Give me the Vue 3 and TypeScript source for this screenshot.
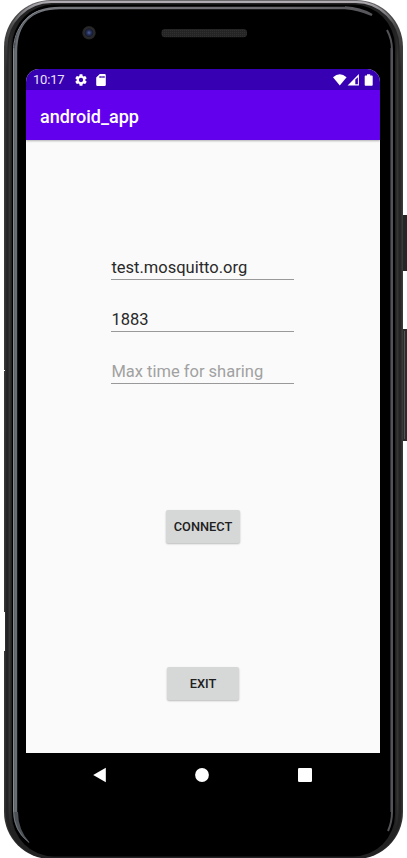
<script setup lang="ts">
import { ref } from 'vue'

interface Field {
  id: string
  value: string
  hint: string
}

const fields = ref<Field[]>([
  { id: 'host', value: 'test.mosquitto.org', hint: '' },
  { id: 'port', value: '1883', hint: '' },
  { id: 'time', value: '', hint: 'Max time for sharing' },
])
</script>

<template>
  <div class="device">
    <svg class="shell" viewBox="0 0 407 858" aria-hidden="true">
      <defs>
        <linearGradient id="rim" gradientUnits="userSpaceOnUse" x1="0" y1="0" x2="0" y2="858">
          <stop offset="0" stop-color="#b8b4b9" />
          <stop offset="0.006" stop-color="#a09da2" />
          <stop offset="0.03" stop-color="#4c4c4c" />
          <stop offset="0.08" stop-color="#292929" />
          <stop offset="1" stop-color="#222" />
        </linearGradient>
        <linearGradient id="edge" gradientUnits="userSpaceOnUse" x1="0" y1="0" x2="0" y2="858">
          <stop offset="0" stop-color="#6a686b" />
          <stop offset="0.02" stop-color="#454545" />
          <stop offset="0.06" stop-color="#3b3b3b" />
          <stop offset="0.95" stop-color="#363636" />
          <stop offset="1" stop-color="#222" />
        </linearGradient>
        <linearGradient id="band" gradientUnits="userSpaceOnUse" x1="0" y1="28" x2="0" y2="832">
          <stop offset="0" stop-color="#363636" stop-opacity="0" />
          <stop offset="0.04" stop-color="#363636" />
          <stop offset="0.96" stop-color="#363636" />
          <stop offset="1" stop-color="#363636" stop-opacity="0" />
        </linearGradient>
        <linearGradient id="glint" gradientUnits="userSpaceOnUse" x1="0" y1="0" x2="407" y2="0">
          <stop offset="0" stop-color="#5d646a" />
          <stop offset="0.08" stop-color="#77797f" />
          <stop offset="0.7" stop-color="#6d6b70" />
          <stop offset="1" stop-color="#4c4c50" />
        </linearGradient>
        <radialGradient id="lens">
          <stop offset="0" stop-color="#4d619c" />
          <stop offset="0.3" stop-color="#25305a" />
          <stop offset="0.58" stop-color="#171a29" />
          <stop offset="0.7" stop-color="#2b2b2d" />
          <stop offset="1" stop-color="#202020" />
        </radialGradient>
        <pattern id="mesh" width="2" height="2" patternUnits="userSpaceOnUse">
          <rect width="2" height="2" fill="#252525" />
          <rect width="1" height="1" fill="#303030" />
        </pattern>
      </defs>
      <rect x="402" y="215" width="6" height="56" rx="1" fill="#262626" />
      <rect x="402" y="329" width="6" height="112" rx="1" fill="#2b2b2b" />
      <path d="M404.500 331V439" stroke="#555" />
      <rect x="4" y="0" width="399" height="859" rx="47" fill="url(#edge)" />
      <rect x="6.500" y="2" width="394" height="855.500" rx="45" fill="#222" stroke="url(#rim)" stroke-width="2" />
      <path d="M13 28Q9.500 38 9.500 50V812Q9.500 822 13 832" fill="none" stroke="url(#band)" stroke-width="2" />
      <path d="M394 28Q397.500 38 397.500 50V812Q397.500 822 394 832" fill="none" stroke="url(#band)" stroke-width="2" />
      <rect x="12" y="4.500" width="383" height="852" rx="42" fill="#000" />
      <path d="M16 812V52C16 24 30 8 60 8H345Q359 9 372 15Q360 8 345 7.500" fill="none" stroke="url(#glint)" stroke-width="2.400" />
      <path d="M13.500 812V51C13.500 32 24 16 40 10.500" fill="none" stroke="#858a8f" />
      <path d="M14.500 812V51C14.500 33 24 18 40 11" fill="none" stroke="#5d646a" />
      <path d="M13 812H18Q18 830 30 843Q14 833 13 812Z" fill="#4b5156" />
      <path d="M13.500 811Q14 831 29 842.500" fill="none" stroke="#777c81" stroke-width=".8" />
      <path d="M387 30Q392 39 392 50V812Q392 822 388 831" fill="none" stroke="#535358" stroke-width="2" />
      <path d="M390.500 48V812" stroke="#303034" />
      <path d="M4 370.500H5" stroke="#fff" />
      <path d="M4.500 612V651" stroke="#fff" />
      <circle cx="89" cy="32.700" r="6.800" fill="url(#lens)" />
      <rect x="161.500" y="29" width="85.500" height="8.200" rx="3.500" fill="url(#mesh)" />
    </svg>

    <main class="screen">
      <header class="status">
        <span class="clock">10:17</span>
        <svg class="gear" viewBox="2 2 20 20">
          <path fill="#fff" fill-rule="evenodd" d="M19.140 12.940a7 7 0 0 0 0-1.880l2.030-1.580a.5.5 0 0 0 .12-.61l-1.920-3.320a.5.5 0 0 0-.59-.22l-2.390.96a7 7 0 0 0-1.620-.94l-.36-2.540a.5.5 0 0 0-.48-.41h-3.840a.5.5 0 0 0-.47.41l-.36 2.540a7 7 0 0 0-1.620.94l-2.390-.96a.5.5 0 0 0-.59.22L2.740 8.870a.5.5 0 0 0 .12.610l2.030 1.580a7 7 0 0 0 0 1.880l-2.030 1.580a.5.5 0 0 0-.12.610l1.920 3.320c.12.220.37.290.59.220l2.390-.96c.5.380 1.030.700 1.620.940l.36 2.540c.05.240.24.410.48.410h3.840c.24 0 .44-.17.470-.41l.36-2.540a7 7 0 0 0 1.620-.94l2.390.96c.22.080.47 0 .59-.22l1.920-3.320a.5.5 0 0 0-.12-.61zM12 15.600a3.600 3.600 0 1 1 0-7.200 3.600 3.600 0 0 1 0 7.200z" />
        </svg>
        <svg class="card" viewBox="4 2 16 20">
          <path fill="#fff" fill-rule="evenodd" d="M18 2h-8L4 8v12a2 2 0 0 0 2 2h12a2 2 0 0 0 2-2V4a2 2 0 0 0-2-2zM9.500 5.500h2v3h-2zm3.200 0h2v3h-2zm3.200 0h2v3h-2z" />
        </svg>
        <svg class="signals" viewBox="0 0 40 12">
          <path fill="#fff" d="M0 3.200Q6.800-2.700 13.600 3.200L6.800 11.500Z" />
          <path fill="#fff" fill-rule="evenodd" d="M14.600 11.500L25.900 0V11.500ZM22.300 5.600V10.300H24.900V3.300Z" />
          <path fill="#fff" d="M34 .3h3.200v1.300h1.700q.8 0 .8.800v8.500q0 .8-.8.800h-6.400q-.8 0-.8-.8V2.400q0-.8.800-.8H34Z" />
        </svg>
      </header>
      <h1 class="appbar">android_app</h1>
      <form class="content" @submit.prevent>
        <input
          v-for="field in fields"
          :key="field.id"
          v-model="field.value"
          class="field"
          type="text"
          spellcheck="false"
          :placeholder="field.hint"
        />
        <button class="button connect" type="button">CONNECT</button>
        <button class="button exit" type="button">EXIT</button>
      </form>
    </main>

    <nav class="navigation">
      <svg viewBox="0 0 16 16"><path d="M1.200 8L13.800 .7V15.300Z" /></svg>
      <svg viewBox="0 0 16 16"><circle cx="8" cy="8" r="6.900" /></svg>
      <svg viewBox="0 0 16 16"><rect x="1" y="1" width="14" height="14" rx="1.300" /></svg>
    </nav>
  </div>
</template>

<style>
body {
  background: #fff;
}
</style>

<style scoped>
.device {
  position: relative;
  box-sizing: border-box;
  width: 407px;
  height: 858px;
  padding: 69px 27px 0 26px;
  overflow: hidden;
  font-family: Roboto, sans-serif;
}
.shell {
  position: absolute;
  inset: 0;
  width: 407px;
  height: 858px;
}
.screen {
  position: relative;
  display: flex;
  flex-direction: column;
  height: 684px;
  overflow: hidden;
  border-radius: 13px 13px 0 0;
  background: #fafafa;
}
.status {
  display: flex;
  align-items: center;
  height: 21px;
  padding: 0 7px;
  background: #3700b3;
  color: #fff;
}
.clock {
  width: 42px;
  font-size: 13px;
  letter-spacing: -0.2px;
  line-height: 21px;
  color: #e9e3f7;
}
.gear {
  width: 12px;
  height: 12px;
}
.card {
  width: 10px;
  height: 12px;
  margin-left: 9px;
}
.signals {
  width: 40px;
  height: 12px;
  margin-left: auto;
}
.appbar {
  z-index: 1;
  height: 50px;
  margin: 0;
  padding-left: 14px;
  background: #6200ee;
  box-shadow: 0 1px 2px rgba(0, 0, 0, 0.3);
  color: #fff;
  font-size: 18px;
  font-weight: 500;
  line-height: 53px;
}
.content {
  display: flex;
  flex-direction: column;
  align-items: center;
  padding-top: 112px;
}
.field {
  box-sizing: border-box;
  width: 183px;
  height: 28px;
  margin: 0 1px 24px 0;
  padding: 3px 0 0 0.400px;
  border: 0;
  border-bottom: 1px solid #999;
  border-radius: 0;
  outline: 0;
  background: transparent;
  color: #292929;
  font: 400 16.500px/24px Roboto, sans-serif;
}
.field::placeholder {
  color: #a1a1a1;
  opacity: 1;
}
.button {
  height: 33px;
  padding: 0;
  border: 0;
  border-radius: 2px;
  background: #d6d7d7;
  box-shadow: 0 1px 2px rgba(0, 0, 0, 0.26);
  color: #202020;
  font: 500 12.800px/33px Roboto, sans-serif;
}
.connect {
  width: 74px;
  margin-top: 102px;
}
.exit {
  width: 72px;
  margin-top: 124px;
}
.navigation {
  position: relative;
  display: flex;
  justify-content: space-between;
  padding: 14px 67.500px 0 65.500px;
}
.navigation svg {
  width: 16px;
  height: 16px;
  fill: #fff;
}
</style>
